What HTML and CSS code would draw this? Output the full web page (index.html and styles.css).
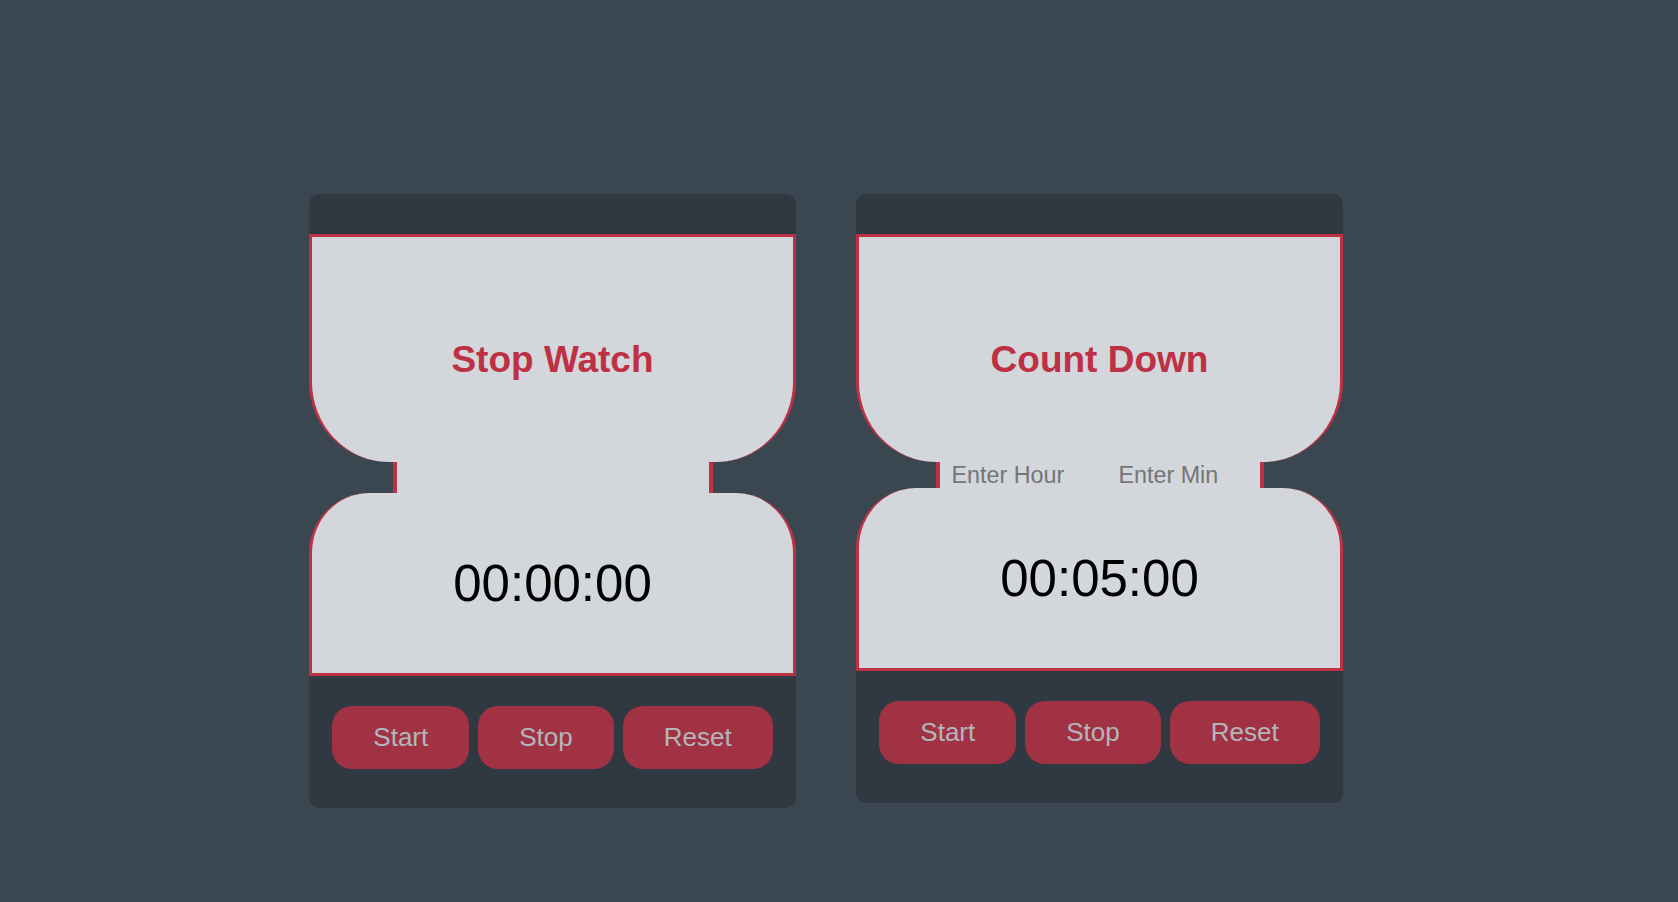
FILE: index.html
```html
<!DOCTYPE html>
<html lang="en">
<head>
<meta charset="utf-8">
<title>Timers</title>
<link rel="stylesheet" href="styles.css">
</head>
<body>
<main class="board">
  <section class="card">
    <div class="card-head"></div>
    <div class="bulb bulb-top">
      <h1 class="title">Stop Watch</h1>
    </div>
    <div class="neck neck-watch"></div>
    <div class="bulb bulb-bottom">
      <div class="time">00:00:00</div>
    </div>
    <div class="card-foot">
      <button class="btn">Start</button>
      <button class="btn">Stop</button>
      <button class="btn">Reset</button>
    </div>
  </section>
  <section class="card">
    <div class="card-head"></div>
    <div class="bulb bulb-top">
      <h1 class="title">Count Down</h1>
    </div>
    <div class="neck neck-count">
      <input class="field field-hour" type="text" placeholder="Enter Hour">
      <input class="field field-min" type="text" placeholder="Enter Min">
    </div>
    <div class="bulb bulb-bottom">
      <div class="time">00:05:00</div>
    </div>
    <div class="card-foot">
      <button class="btn">Start</button>
      <button class="btn">Stop</button>
      <button class="btn">Reset</button>
    </div>
  </section>
</main>
</body>
</html>
```
FILE: styles.css
```css
* {
  box-sizing: border-box;
}

html, body {
  margin: 0;
  padding: 0;
}

body {
  background: #3a4750;
  font-family: "Liberation Sans", Arial, Helvetica, sans-serif;
  height: 902px;
  overflow: hidden;
}

.board {
  display: flex;
  justify-content: center;
  align-items: flex-start;
  gap: 60px;
  padding-top: 194px;
  padding-right: 26px;
}

.card {
  width: 487px;
  display: flex;
  flex-direction: column;
}

.card-head {
  height: 40px;
  background: #303841;
  border-radius: 10px 10px 0 0;
}

.bulb {
  background: #d3d6db;
  border: 3px solid #be3144;
}

.bulb-top {
  height: 228px;
  border-bottom: 0;
  border-radius: 0 0 80px 80px;
  padding-top: 102px;
  text-align: center;
}

.title {
  margin: 0;
  font-size: 37px;
  font-weight: 700;
  line-height: normal;
  color: #be3144;
}

.neck {
  margin: 0 auto;
  background: #d3d6db;
  border-left: 4px solid #be3144;
  border-right: 4px solid #be3144;
}

.neck-watch {
  width: 320px;
  height: 31px;
}

.neck-count {
  width: 328px;
  height: 26px;
  display: flex;
}

.field {
  height: 26px;
  margin: 0;
  padding: 0 0 0 12px;
  border: 0;
  outline: none;
  background: transparent;
  font-family: inherit;
  font-size: 23.3px;
  color: #222;
}

.field::placeholder {
  color: #757575;
}

.field-hour {
  width: 167px;
}

.field-min {
  width: 153px;
}

.bulb-bottom {
  height: 183px;
  border-top: 0;
  border-radius: 60px 60px 0 0;
  display: flex;
  align-items: center;
  justify-content: center;
}

.time {
  font-size: 51px;
  line-height: normal;
  color: #000;
}

.card-foot {
  height: 132px;
  background: #303841;
  border-radius: 0 0 10px 10px;
  padding-top: 30px;
  display: flex;
  justify-content: center;
  align-items: flex-start;
  gap: 9px;
}

.btn {
  font-family: inherit;
  font-size: 26px;
  line-height: 31px;
  padding: 16px 41px;
  border: 0;
  border-radius: 20px;
  background: #be3144;
  color: #d3d6db;
  opacity: 0.8;
  cursor: pointer;
}
```
